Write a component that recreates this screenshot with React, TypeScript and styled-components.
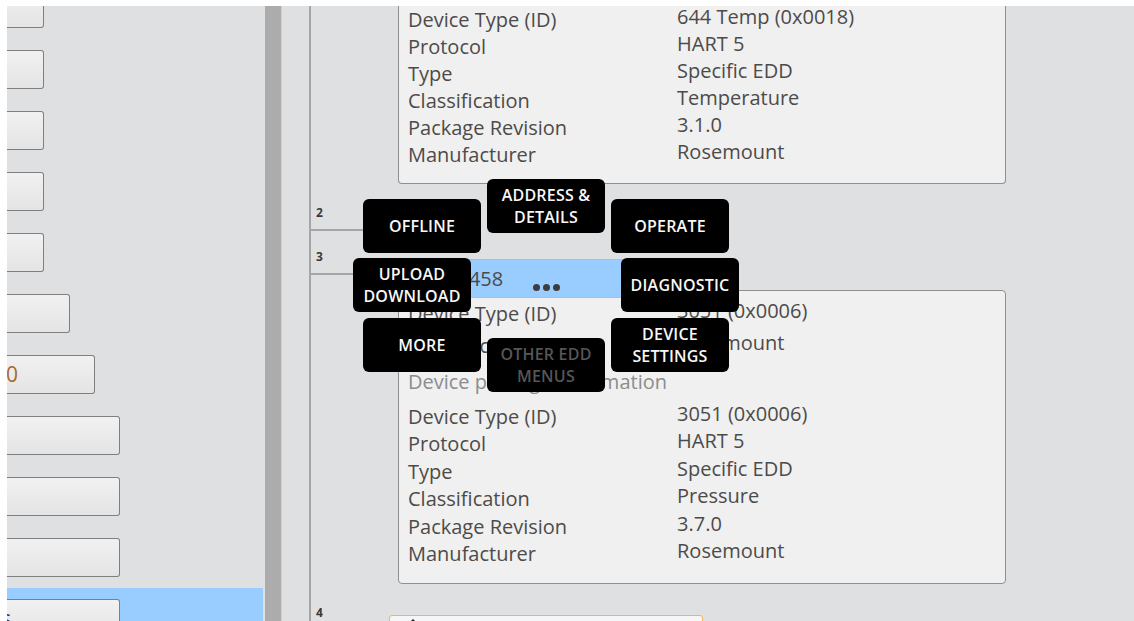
import React from "react";
import styled, { createGlobalStyle, css } from "styled-components";

const GlobalStyle = createGlobalStyle`
  html, body {
    margin: 0;
    padding: 0;
    background: #ffffff;
    overflow: hidden;
  }
  * { box-sizing: border-box; }
`;

const Shell = styled.div`
  display: flex;
  width: 1134px;
  height: 621px;
  padding: 6px 0 0 7px;
  background: #ffffff;
  font-family: "Open Sans", "Noto Sans", sans-serif;
  overflow: hidden;
`;

/* ---------- left tree of fields ---------- */

const Sidebar = styled.aside`
  flex: none;
  width: 258px;
  padding-right: 2px;
  background: #dfe0e2;
  overflow: hidden;
`;

const SideList = styled.div`
  display: flex;
  flex-direction: column;
  margin-top: -28px;
`;

const SideRow = styled.div<{ $selected?: boolean }>`
  flex: none;
  height: 61px;
  padding-top: 11px;
  background: ${(p) => (p.$selected ? "#99ccff" : "transparent")};
`;

const FieldButton = styled.div<{ $width: number }>`
  display: flex;
  align-items: center;
  width: ${(p) => p.$width}px;
  height: 39px;
  border: 1px solid #7f7f7f;
  border-left: none;
  border-radius: 0 3px 3px 0;
  background: linear-gradient(#f1f1f1, #e4e4e4);
  overflow: hidden;
`;

const FieldText = styled.span<{ $tone: string; $shift: number }>`
  margin-left: ${(p) => p.$shift}px;
  font-size: 21px;
  line-height: 1;
  color: ${(p) => p.$tone};
  white-space: nowrap;
`;

const Splitter = styled.div`
  flex: none;
  width: 17px;
  background: #acacac;
  border-right: 1px solid #cfcfcf;
`;

/* ---------- main device tree ---------- */

const Main = styled.main`
  position: relative;
  flex: 1;
  background: #dfe0e2;
  overflow: hidden;
`;

const Tree = styled.div`
  display: flex;
  flex-direction: column;
  min-height: 100%;
  margin-left: 27px;
  border-left: 2px solid #a6a6a6;
`;

const NodeRow = styled.div<{ $gap: number; $height?: number }>`
  display: grid;
  grid-template-columns: 78px 1fr;
  margin-top: ${(p) => p.$gap}px;
  ${(p) => p.$height && css`height: ${p.$height}px;`}
  flex: none;
`;

const Gutter = styled.div`
  display: flex;
  flex-direction: column;
`;

const NodeNumber = styled.span`
  height: 12px;
  margin-top: -8px;
  padding-left: 5px;
  font-size: 12px;
  font-weight: 700;
  line-height: 12px;
  color: #3d3935;
`;

const Branch = styled.span`
  height: 2px;
  margin-top: 10px;
  background: #a6a6a6;
`;

const NodeBody = styled.div`
  display: flex;
  flex-direction: column;
`;

const NodeHeader = styled.div<{ $active?: boolean }>`
  position: relative;
  z-index: 1;
  display: flex;
  align-items: center;
  gap: 8px;
  width: 314px;
  height: 39px;
  padding-left: 16px;
  border: 1px solid #f2b457;
  border-radius: 3px;
  background: ${(p) => (p.$active ? "#99ccff" : "#f6f6f6")};
  font-size: 20px;
  color: #4a4a4a;
`;

const HeaderIcon = styled.svg`
  flex: none;
  align-self: flex-start;
  margin-top: 2px;
`;

const Card = styled.section<{ $clipTop?: boolean; $pad: string; $overlap?: number }>`
  width: 608px;
  margin-left: 9px;
  margin-top: ${(p) => (p.$overlap ? -p.$overlap : 0)}px;
  padding: ${(p) => p.$pad};
  background: #f0f0f0;
  border: 1px solid #8f8f8f;
  border-radius: 4px;
  ${(p) =>
    p.$clipTop &&
    css`
      border-top: none;
      border-top-left-radius: 0;
      border-top-right-radius: 0;
    `}
`;

const InfoGrid = styled.dl<{ $line: number; $rowGap?: number; $top?: number }>`
  display: grid;
  grid-template-columns: 269px 1fr;
  row-gap: ${(p) => p.$rowGap ?? 0}px;
  margin: ${(p) => p.$top ?? 0}px 0 0 0;
  padding-left: 9px;
  font-size: 20px;
  line-height: ${(p) => p.$line}px;
  color: #4d4b49;
`;

const Label = styled.dt`
  margin: 0;
  white-space: nowrap;
`;

const Value = styled.dd`
  margin: -3px 0 0 0;
  white-space: nowrap;
`;

const SubHeading = styled.div`
  margin-top: 9px;
  padding-left: 9px;
  font-size: 20px;
  line-height: 27px;
  color: #8c8c8c;
`;

/* ---------- radial context menu ---------- */

const MenuTile = styled.div<{ $x: number; $y: number; $disabled?: boolean }>`
  position: absolute;
  left: ${(p) => p.$x}px;
  top: ${(p) => p.$y}px;
  z-index: 5;
  display: flex;
  align-items: center;
  justify-content: center;
  width: 118px;
  height: 54px;
  border-radius: 6px;
  background: #000000;
  color: ${(p) => (p.$disabled ? "#565656" : "#f7f7f7")};
  font-size: 16px;
  font-weight: 600;
  line-height: 22px;
  letter-spacing: 0.2px;
  text-align: center;
  text-transform: uppercase;
  white-space: pre-line;
`;

const MenuDots = styled.div`
  position: absolute;
  left: 251px;
  top: 278px;
  z-index: 4;
  display: flex;
  gap: 3px;
`;

const Dot = styled.span`
  width: 7px;
  height: 7px;
  border-radius: 50%;
  background: #3d3d3d;
`;

type Row = [string, string];

const tempRows: Row[] = [
  ["Device Type (ID)", "644 Temp (0x0018)"],
  ["Protocol", "HART 5"],
  ["Type", "Specific EDD"],
  ["Classification", "Temperature"],
  ["Package Revision", "3.1.0"],
  ["Manufacturer", "Rosemount"],
];

const pressureSummary: Row[] = [
  ["Device Type (ID)", "3051 (0x0006)"],
  ["Manufacturer", "Rosemount"],
];

const pressureRows: Row[] = [
  ["Device Type (ID)", "3051 (0x0006)"],
  ["Protocol", "HART 5"],
  ["Type", "Specific EDD"],
  ["Classification", "Pressure"],
  ["Package Revision", "3.7.0"],
  ["Manufacturer", "Rosemount"],
];

const fields: { width: number; text?: string; tone?: string; shift?: number }[] = [
  { width: 37 },
  { width: 37 },
  { width: 37 },
  { width: 37 },
  { width: 37 },
  { width: 63 },
  { width: 88, text: "0", tone: "#a6682c", shift: -1 },
  { width: 113 },
  { width: 113 },
  { width: 113 },
  { width: 113, text: "s", tone: "#1f3d6e", shift: -6 },
];

const menu: { label: string; x: number; y: number; disabled?: boolean }[] = [
  { label: "Offline", x: 81, y: 193 },
  { label: "Address &\nDetails", x: 205, y: 173 },
  { label: "Operate", x: 329, y: 193 },
  { label: "Upload\nDownload", x: 71, y: 252 },
  { label: "Diagnostic", x: 339, y: 252 },
  { label: "More", x: 81, y: 312 },
  { label: "Other EDD\nMenus", x: 205, y: 332, disabled: true },
  { label: "Device\nSettings", x: 329, y: 312 },
];

const Info = ({ rows, line, rowGap, top }: { rows: Row[]; line: number; rowGap?: number; top?: number }) => (
  <InfoGrid $line={line} $rowGap={rowGap} $top={top}>
    {rows.map(([k, v], i) => (
      <React.Fragment key={i}>
        <Label>{k}</Label>
        <Value>{v}</Value>
      </React.Fragment>
    ))}
  </InfoGrid>
);

const DeviceGlyph = () => (
  <HeaderIcon width="14" height="22" viewBox="0 0 14 22">
    <path d="M7 1 L12 6 H9 V11 H5 V6 H2 Z" fill="#1d1d1d" />
    <rect x="2" y="13" width="10" height="8" rx="1.5" fill="#1d1d1d" />
  </HeaderIcon>
);

export default function App() {
  return (
    <>
      <GlobalStyle />
      <Shell>
        <Sidebar>
          <SideList>
            {fields.map((f, i) => (
              <SideRow key={i} $selected={i === fields.length - 1}>
                <FieldButton $width={f.width}>
                  {f.text && (
                    <FieldText $tone={f.tone ?? "#444"} $shift={f.shift ?? 0}>
                      {f.text}
                    </FieldText>
                  )}
                </FieldButton>
              </SideRow>
            ))}
          </SideList>
        </Sidebar>
        <Splitter />
        <Main>
          <Tree>
            <NodeRow $gap={0}>
              <Gutter />
              <NodeBody>
                <Card $clipTop $pad="0 0 14px 0">
                  <Info rows={tempRows} line={27.1} />
                </Card>
              </NodeBody>
            </NodeRow>

            <NodeRow $gap={31} $height={44}>
              <Gutter>
                <NodeNumber>2</NodeNumber>
                <Branch />
              </Gutter>
              <NodeBody />
            </NodeRow>

            <NodeRow $gap={0}>
              <Gutter>
                <NodeNumber>3</NodeNumber>
                <Branch />
              </Gutter>
              <NodeBody>
                <NodeHeader $active>
                  <DeviceGlyph />
                  <span>PT-1458</span>
                </NodeHeader>
                <Card $overlap={8} $pad="9px 0 15px 0">
                  <Info rows={pressureSummary} line={27.1} rowGap={5} />
                  <SubHeading>Device package information</SubHeading>
                  <Info rows={pressureRows} line={27.5} top={8} />
                </Card>
              </NodeBody>
            </NodeRow>

            <NodeRow $gap={31}>
              <Gutter>
                <NodeNumber>4</NodeNumber>
                <Branch />
              </Gutter>
              <NodeBody>
                <NodeHeader>
                  <DeviceGlyph />
                  <span>TT-2210</span>
                </NodeHeader>
              </NodeBody>
            </NodeRow>
          </Tree>

          <MenuDots>
            <Dot />
            <Dot />
            <Dot />
          </MenuDots>
          {menu.map((m) => (
            <MenuTile key={m.label} $x={m.x} $y={m.y} $disabled={m.disabled}>
              {m.label}
            </MenuTile>
          ))}
        </Main>
      </Shell>
    </>
  );
}
